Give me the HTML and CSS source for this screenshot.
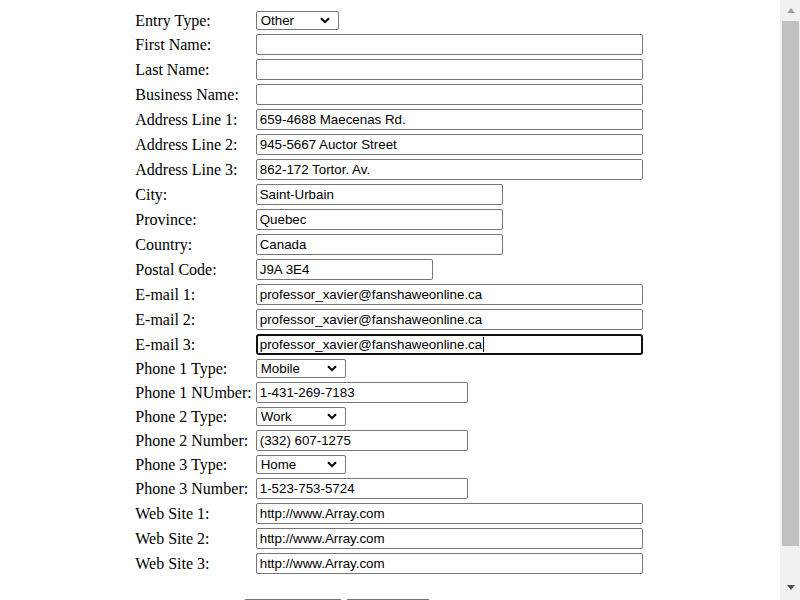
FILE: index.html
```html
<!DOCTYPE html>
<html>
<head>
<meta charset="utf-8">
<title>Entry</title>
<link rel="stylesheet" href="styles.css">
</head>
<body>
<form class="entry-form">
<table class="form-table">
<tr><td>Entry Type:</td><td><span class="sel-wrap"><select class="sel-entry"><option>Other</option></select><svg class="chev" width="10" height="7" viewBox="0 0 10 7"><path d="M1 1.2 L5 5.2 L9 1.2" fill="none" stroke="#000" stroke-width="2"/></svg></span></td></tr>
<tr><td>First Name:</td><td><input class="w-long" type="text" value=""></td></tr>
<tr><td>Last Name:</td><td><input class="w-long" type="text" value=""></td></tr>
<tr><td>Business Name:</td><td><input class="w-long" type="text" value=""></td></tr>
<tr><td>Address Line 1:</td><td><input class="w-long" type="text" value="659-4688 Maecenas Rd."></td></tr>
<tr><td>Address Line 2:</td><td><input class="w-long" type="text" value="945-5667 Auctor Street"></td></tr>
<tr><td>Address Line 3:</td><td><input class="w-long" type="text" value="862-172 Tortor. Av."></td></tr>
<tr><td>City:</td><td><input class="w-mid" type="text" value="Saint-Urbain"></td></tr>
<tr><td>Province:</td><td><input class="w-mid" type="text" value="Quebec"></td></tr>
<tr><td>Country:</td><td><input class="w-mid" type="text" value="Canada"></td></tr>
<tr><td>Postal Code:</td><td><input class="w-postal" type="text" value="J9A 3E4"></td></tr>
<tr><td>E-mail 1:</td><td><input class="w-long" type="text" value="professor_xavier@fanshaweonline.ca"></td></tr>
<tr><td>E-mail 2:</td><td><input class="w-long" type="text" value="professor_xavier@fanshaweonline.ca"></td></tr>
<tr><td>E-mail 3:</td><td><span class="focus-wrap"><input class="w-long focused" type="text" value="professor_xavier@fanshaweonline.ca"><span class="caret"></span></span></td></tr>
<tr><td>Phone 1 Type:</td><td><span class="sel-wrap"><select class="sel-phone"><option>Mobile</option></select><svg class="chev" width="10" height="7" viewBox="0 0 10 7"><path d="M1 1.2 L5 5.2 L9 1.2" fill="none" stroke="#000" stroke-width="2"/></svg></span></td></tr>
<tr><td>Phone 1 NUmber:</td><td><input class="w-phone" type="text" value="1-431-269-7183"></td></tr>
<tr><td>Phone 2 Type:</td><td><span class="sel-wrap"><select class="sel-phone"><option>Work</option></select><svg class="chev" width="10" height="7" viewBox="0 0 10 7"><path d="M1 1.2 L5 5.2 L9 1.2" fill="none" stroke="#000" stroke-width="2"/></svg></span></td></tr>
<tr><td>Phone 2 Number:</td><td><input class="w-phone" type="text" value="(332) 607-1275"></td></tr>
<tr><td>Phone 3 Type:</td><td><span class="sel-wrap"><select class="sel-phone"><option>Home</option></select><svg class="chev" width="10" height="7" viewBox="0 0 10 7"><path d="M1 1.2 L5 5.2 L9 1.2" fill="none" stroke="#000" stroke-width="2"/></svg></span></td></tr>
<tr><td>Phone 3 Number:</td><td><input class="w-phone" type="text" value="1-523-753-5724"></td></tr>
<tr><td>Web Site 1:</td><td><input class="w-long" type="text" value="http://www.Array.com"></td></tr>
<tr><td>Web Site 2:</td><td><input class="w-long" type="text" value="http://www.Array.com"></td></tr>
<tr><td>Web Site 3:</td><td><input class="w-long" type="text" value="http://www.Array.com"></td></tr>
</table>
<div class="actions">
<button type="button" class="btn btn-save">Save Entry</button>
<button type="button" class="btn btn-cancel">Cancel</button>
</div>
</form>
<div class="scrollbar">
  <div class="sb-btn"><span class="arrow-up"></span></div>
  <div class="sb-thumb"></div>
  <div class="sb-rest"></div>
  <div class="sb-btn"><span class="arrow-down"></span></div>
</div>
</body>
</html>
```
FILE: styles.css
```css
html, body {
  margin: 0;
  padding: 0;
}
body {
  margin: 8px 26px 8px 8px;
  font-family: "Liberation Serif", "Times New Roman", serif;
  font-size: 16px;
  color: #000;
  background: #fff;
}
.form-table {
  margin: 0 auto;
  border-spacing: 2px;
  position: relative;
  left: -2px;
}
.form-table td {
  padding: 1px;
  white-space: nowrap;
}
input, select, button {
  font-family: "Liberation Sans", Arial, sans-serif;
  font-size: 13.333px;
  color: #000;
}
input {
  box-sizing: border-box;
  height: 21px;
  border: 1px solid #767676;
  border-radius: 2px;
  padding: 1px 3px;
  margin: 0;
}
.w-long { width: 387px; }
.w-mid { width: 247px; }
.w-postal { width: 177px; }
.w-phone { width: 212px; }
.sel-wrap {
  position: relative;
  display: inline-block;
}
select {
  -webkit-appearance: none;
  appearance: none;
  box-sizing: border-box;
  height: 19px;
  border: 1px solid #767676;
  border-radius: 2px;
  background: #fff;
  padding: 0 0 0 4px;
  margin: 0;
}
.sel-entry { width: 83px; }
.sel-phone { width: 90px; }
.chev {
  position: absolute;
  right: 9px;
  top: 6px;
  pointer-events: none;
}
.focus-wrap {
  position: relative;
  display: inline-block;
}
.focused {
  border: 2px solid #101010;
  border-radius: 3px;
  padding: 0 2px;
}
.caret {
  position: absolute;
  left: 227px;
  top: 3px;
  width: 1px;
  height: 15px;
  background: #000;
}
.actions {
  margin-top: 22px;
  padding-left: 236px;
  display: flex;
  gap: 4px;
}
.btn {
  height: 24px;
  border: 1px solid #767676;
  border-radius: 2px;
  background: #efefef;
}
.btn-save { width: 98px; }
.btn-cancel { width: 84px; }
form { padding-bottom: 120px; }

.scrollbar {
  position: fixed;
  top: 0;
  right: 0;
  width: 20px;
  height: 100vh;
  background: #f1f1f1;
  display: flex;
  flex-direction: column;
  align-items: center;
}
.sb-btn {
  height: 20px;
  width: 100%;
  display: flex;
  align-items: center;
  justify-content: center;
  flex: none;
}
.sb-thumb {
  flex: none;
  width: 17px;
  height: 525px;
  margin-top: 1px;
  background: #c1c1c1;
  margin-left: 1px;
}
.sb-rest { flex: 1; }
.arrow-up {
  width: 0;
  height: 0;
  border-left: 4.5px solid transparent;
  border-right: 4.5px solid transparent;
  border-bottom: 5px solid #a3a3a3;
  margin-left: 1px;
}
.arrow-down {
  width: 0;
  height: 0;
  border-left: 4.5px solid transparent;
  border-right: 4.5px solid transparent;
  border-top: 5px solid #505050;
  margin-left: 1px;
  margin-top: -6px;
}
```
